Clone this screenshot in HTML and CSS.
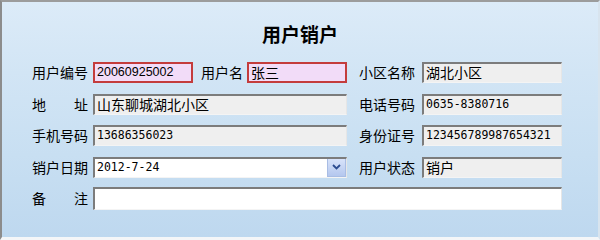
FILE: index.html
```html
<!DOCTYPE html>
<html lang="zh-CN">

<head>
  <meta charset="UTF-8">
  <title>用户销户</title>
  <link rel="stylesheet" href="styles.css">
</head>

<body>
  <div class="panel">
    <div class="title">用户销户</div>

    <div class="form">
      <div class="row">
        <div class="label">用户编号</div>
        <div class="mid">
          <div class="field req w100 num">20060925002</div>
          <div class="label short">用户名</div>
          <div class="field req w100">张三</div>
        </div>
        <div class="label right">小区名称</div>
        <div class="field ro side">湖北小区</div>
      </div>

      <div class="row">
        <div class="label spread"><span>地</span><span>址</span></div>
        <div class="field ro wide">山东聊城湖北小区</div>
        <div class="label right">电话号码</div>
        <div class="field ro side mono">0635-8380716</div>
      </div>

      <div class="row">
        <div class="label">手机号码</div>
        <div class="field ro wide mono">13686356023</div>
        <div class="label right">身份证号</div>
        <div class="field ro side mono">123456789987654321</div>
      </div>

      <div class="row">
        <div class="label">销户日期</div>
        <div class="field wide select mono">
          <span class="val">2012-7-24</span>
          <span class="drop">
            <svg width="9" height="6" viewBox="0 0 9 6">
              <path d="M1 1 L4.5 4.5 L8 1" fill="none" stroke="#2c4c90" stroke-width="1.8"/>
            </svg>
          </span>
        </div>
        <div class="label right">用户状态</div>
        <div class="field ro side">销户</div>
      </div>

      <div class="row">
        <div class="label spread"><span>备</span><span>注</span></div>
        <div class="field full memo"></div>
      </div>
    </div>
  </div>
</body>

</html>
```

FILE: styles.css
```css
* {
  margin: 0;
  padding: 0;
  box-sizing: border-box;
}
body {
  width: 600px;
  height: 240px;
  overflow: hidden;
  font-family: "Noto Sans CJK SC", "Liberation Sans", sans-serif;
  font-size: 14px;
  color: #000;
}
.panel {
  width: 600px;
  height: 240px;
  border-top: 2px solid #9c9c9c;
  border-left: 2px solid #8c8c8c;
  border-right: 2px solid #d8e4ee;
  border-bottom: 3px solid #f4f6f8;
  background: linear-gradient(to bottom, #dcebf8 0%, #d2e5f5 30%, #c8dff2 65%, #bed8ef 100%);
  padding: 0 0 0 30px;
}
.title {
  height: 60px;
  padding-top: 19px;
  padding-right: 30px;
  text-align: center;
  font-size: 19px;
  font-weight: bold;
  line-height: 26px;
}
.form {
  display: flex;
  flex-direction: column;
  gap: 10.5px;
}
.row {
  display: flex;
  align-items: center;
  height: 21px;
}
.label {
  width: 56px;
  line-height: 21px;
  white-space: nowrap;
  margin-right: 5px;
}
.label.spread {
  display: flex;
  justify-content: space-between;
}
.label.short {
  width: 43px;
  margin: 0 3px 0 8px;
}
.label.right {
  margin-left: 12px;
  margin-right: 7px;
}
.mid {
  display: flex;
  align-items: center;
  width: 254px;
}
.field {
  height: 21px;
  line-height: 17px;
  padding: 0 2px;
  background: #fff;
  border-top: 2px solid #7c7c7c;
  border-left: 2px solid #7c7c7c;
  border-right: 1px solid #e6e6e6;
  border-bottom: 1px solid #f4f4f4;
  white-space: nowrap;
  overflow: hidden;
}
.field.ro {
  background: #efefef;
}
.field.req {
  background: #f2dcf8;
  border: 2px solid #c43c3c;
  line-height: 17px;
}
.w100 {
  width: 100px;
}
.wide {
  width: 254px;
}
.side {
  width: 140px;
}
.full {
  width: 469px;
  height: 23px;
}
.num {
  font-family: "Liberation Sans", sans-serif;
  font-size: 12.5px;
}
.mono {
  font-family: "DejaVu Sans Mono", "Noto Sans CJK SC", monospace;
  font-size: 11.5px;
}
.select {
  display: flex;
  justify-content: space-between;
  padding-right: 0;
}
.drop {
  width: 19px;
  height: 19px;
  margin-top: -1px;
  border: 1px solid #a9bde4;
  background: linear-gradient(to bottom, #d8e3fa, #b4c7ee);
  display: flex;
  align-items: center;
  justify-content: center;
}
```
